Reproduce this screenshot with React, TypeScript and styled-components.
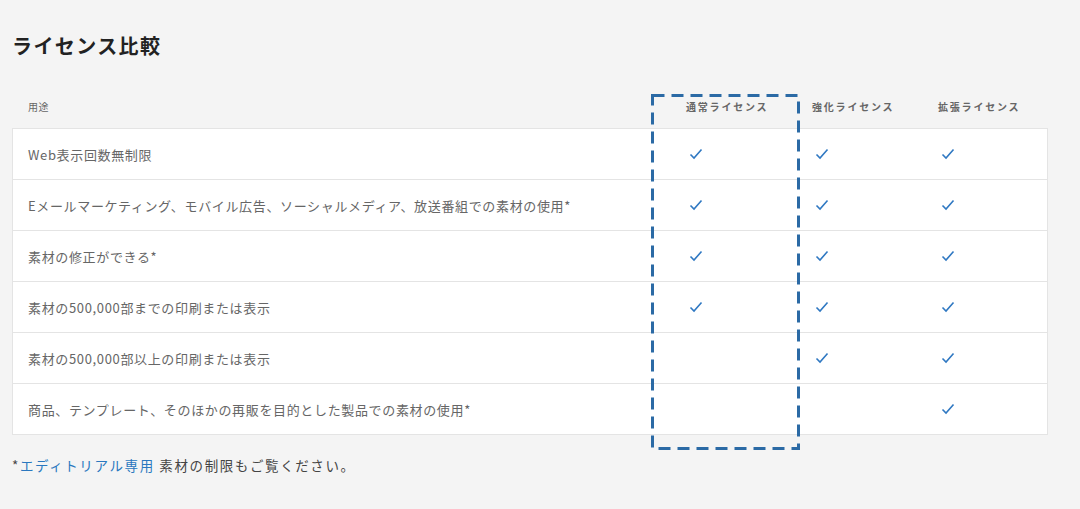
import React from "react";
import styled, { createGlobalStyle } from "styled-components";

const Global = createGlobalStyle`
  body { margin: 0; background: #f4f4f4; font-family: "Noto Sans CJK JP", "Noto Sans", sans-serif; color: #333; }
`;

const Page = styled.div`
  width: 1080px; height: 509px; box-sizing: border-box; padding: 30px 32px 0 12px;
`;
const Title = styled.h1`
  margin: 0; font-size: 20px; font-weight: 700; line-height: 32px; color: #222; letter-spacing: 1.4px;
`;
const Wrap = styled.div`
  position: relative; margin-top: 22px;
`;
const Grid = styled.div`
  display: grid; grid-template-columns: 674px 126px 126px 110px;
`;
const Head = styled.div<{ $first?: boolean }>`
  height: 44px; display: flex; align-items: center;
  padding-left: ${p => (p.$first ? "16px" : "0")};
  font-size: 10px; font-weight: ${p => (p.$first ? 400 : 700)}; color: #666;
  letter-spacing: ${p => (p.$first ? "0.5px" : "1.8px")};
`;
const Body = styled.div`
  background: #fff; border: 1px solid #e4e4e4;
`;
const Row = styled.div`
  display: grid; grid-template-columns: 673px 126px 126px 109px; height: 50px;
  & + & { border-top: 1px solid #e4e4e4; }
`;
const Label = styled.div`
  display: flex; align-items: center; padding-left: 15px; font-size: 13px; color: #666; letter-spacing: 0.65px;
`;
const Cell = styled.div`
  display: flex; align-items: center; padding-left: 3px;
`;
const Box = styled.svg`
  position: absolute; left: 639px; top: 10px; width: 149px; height: 356px; pointer-events: none;
`;
const Note = styled.p`
  margin: 20px 0 0; font-size: 13.5px; color: #444; letter-spacing: 1.6px;
`;
const Link = styled.a`
  color: #2a78bf; text-decoration: none;
`;

const Check = () => (
  <svg width="14" height="12" viewBox="0 0 14 12">
    <path d="M1.5 6.5 L5 10 L12.5 1.5" fill="none" stroke="#2f78c2" strokeWidth="1.6" />
  </svg>
);

const rows: [string, boolean, boolean, boolean][] = [
  ["Web表示回数無制限", true, true, true],
  ["Eメールマーケティング、モバイル広告、ソーシャルメディア、放送番組での素材の使用*", true, true, true],
  ["素材の修正ができる*", true, true, true],
  ["素材の500,000部までの印刷または表示", true, true, true],
  ["素材の500,000部以上の印刷または表示", false, true, true],
  ["商品、テンプレート、そのほかの再販を目的とした製品での素材の使用*", false, false, true],
];

export default function App() {
  return (
    <Page>
      <Global />
      <Title>ライセンス比較</Title>
      <Wrap>
        <Grid>
          <Head $first>用途</Head>
          <Head>通常ライセンス</Head>
          <Head>強化ライセンス</Head>
          <Head>拡張ライセンス</Head>
        </Grid>
        <Body>
          {rows.map(([t, a, b, c]) => (
            <Row key={t}>
              <Label>{t}</Label>
              <Cell>{a && <Check />}</Cell>
              <Cell>{b && <Check />}</Cell>
              <Cell>{c && <Check />}</Cell>
            </Row>
          ))}
        </Body>
        <Box viewBox="0 0 149 356">
          <rect x="1.5" y="1.5" width="146" height="353" fill="none" stroke="#2b6aa5" strokeWidth="3" strokeDasharray="12 7" />
        </Box>
      </Wrap>
      <Note>*<Link href="#">エディトリアル専用</Link> 素材の制限もご覧ください。</Note>
    </Page>
  );
}
